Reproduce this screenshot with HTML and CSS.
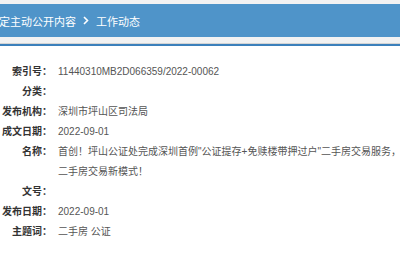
FILE: index.html
```html
<!DOCTYPE html>
<html lang="zh-CN">
  <head>
    <meta http-equiv="Content-Type" content="text/html; charset=utf-8"/>
    <title>工作动态</title>
    <link rel="stylesheet" href="styles.css">
  </head>
  <body>
    <div class="page">
      <div class="crumb-bar">
        <div class="crumb">
          <span class="crumb-first">法定主动公开内容</span>
          <svg class="chevron" width="6" height="9" viewBox="0 0 6 9"><path d="M1 1 L4.5 4.5 L1 8" fill="none" stroke="#fff" stroke-width="1.6"/></svg>
          <span>工作动态</span>
        </div>
      </div>
      <div class="meta">
        <div class="row"><div class="label">索引号：</div><div class="value">11440310MB2D066359/2022-00062</div></div>
        <div class="row"><div class="label">分类：</div><div class="value"></div></div>
        <div class="row"><div class="label">发布机构：</div><div class="value">深圳市坪山区司法局</div></div>
        <div class="row"><div class="label">成文日期：</div><div class="value">2022-09-01</div></div>
        <div class="row"><div class="label">名称：</div><div class="value">首创！坪山公证处完成深圳首例"公证提存+免赎楼带押过户"二手房交易服务，实现二手房交易新模式！</div></div>
        <div class="row"><div class="label">文号：</div><div class="value"></div></div>
        <div class="row"><div class="label">发布日期：</div><div class="value">2022-09-01</div></div>
        <div class="row"><div class="label">主题词：</div><div class="value">二手房 公证</div></div>
      </div>
    </div>
  </body>
</html>
```

FILE: styles.css
```css
html, body {
	margin: 0;
	overflow: hidden;
}
body {
	background: #fff;
	font-family: "Liberation Sans", "Noto Sans CJK SC", sans-serif;
}
.page {
	width: 422px;
}
.crumb-bar {
	background: #f2f2f2;
	padding: 4px 0 6px;
	border-bottom: 1px solid #d4d4d4;
}
.crumb {
	height: 33px;
	background: #4f94c9;
	color: #fff;
	font-size: 11px;
	display: flex;
	align-items: center;
	gap: 7px;
}
.crumb-first {
	margin-left: -12px;
}
.meta {
	border-top: 2px solid #3c80bb;
	padding-top: 16px;
}
.row {
	display: flex;
	font-size: 10px;
	line-height: 20px;
}
.label {
	width: 52px;
	flex-shrink: 0;
	text-align: right;
	font-weight: bold;
	color: #333;
}
.value {
	flex: 1;
	margin-left: 6px;
	color: #555;
}
```
